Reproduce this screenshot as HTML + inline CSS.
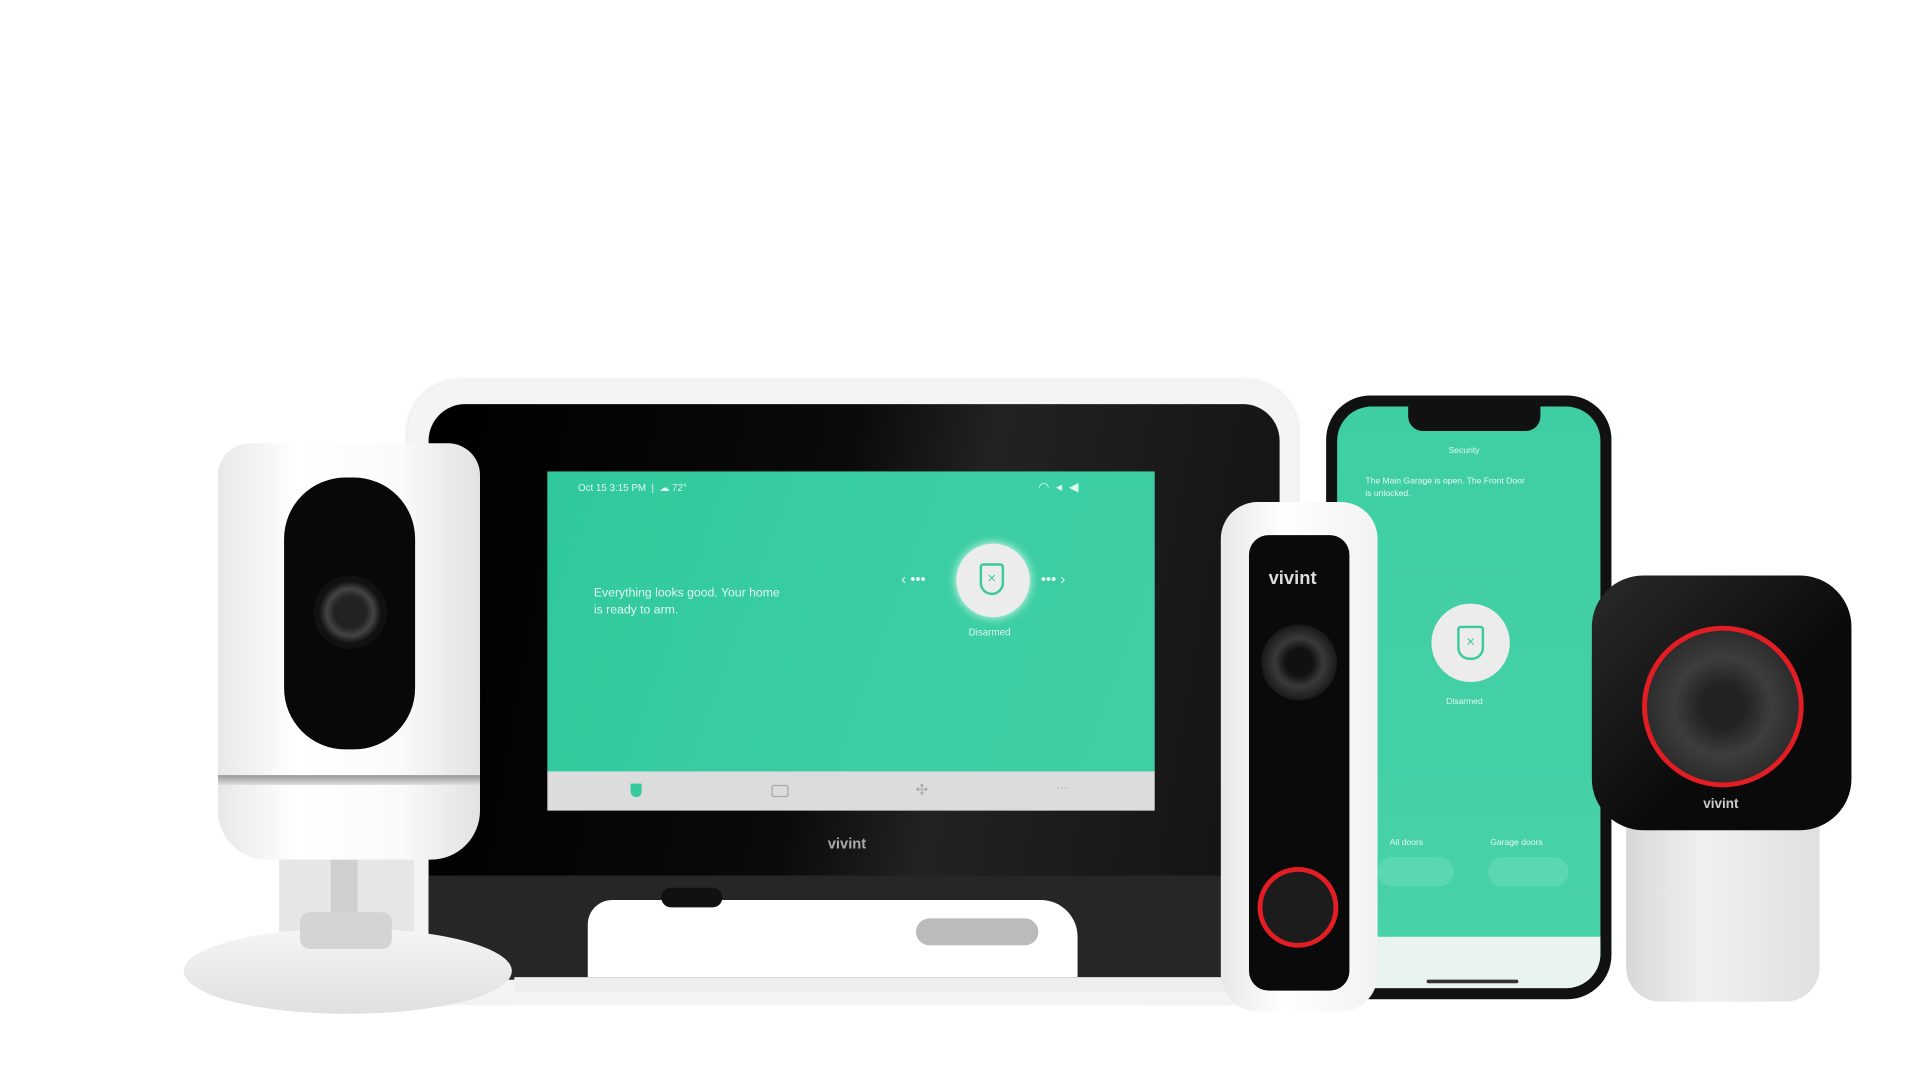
<!DOCTYPE html>
<html><head><meta charset="utf-8"><style>
html,body{margin:0;padding:0;background:#fff;width:1920px;height:1080px;overflow:hidden}
#w{position:absolute;left:0;top:0;width:1568px;height:882px;transform:scale(1.2245);transform-origin:0 0;font-family:"Liberation Sans",sans-serif}
.a{position:absolute}
</style></head><body><div id="w">
<!-- tablet -->
<div class="a" style="left:333px;top:311px;width:727px;height:508px;border-radius:42px;background:#f4f4f4;box-shadow:0 0 4px #ddd"></div>
<div class="a" style="left:350px;top:330px;width:695px;height:470px;border-radius:30px 30px 0 0;background:linear-gradient(100deg,#000 0%,#0a0a0a 45%,#222 60%,#111 100%)"></div>
<div class="a" style="left:350px;top:715px;width:650px;height:85px;background:#262626"></div>
<div class="a" style="left:480px;top:735px;width:400px;height:63px;background:#fff;border-radius:20px 30px 0 0"></div>
<div class="a" style="left:748px;top:750px;width:100px;height:22px;background:#bbb;border-radius:11px"></div>
<div class="a" style="left:540px;top:725px;width:50px;height:16px;background:#111;border-radius:8px"></div>
<div class="a" style="left:420px;top:798px;width:580px;height:12px;background:#eee"></div>
<div class="a" style="left:447px;top:385px;width:496px;height:246px;background:linear-gradient(110deg,#2fc89c 0%,#3acda3 50%,#3fcfa5 100%)"></div>
<div class="a" style="left:447px;top:630px;width:496px;height:32px;background:#dcdcdc"></div>
<div class="a" style="left:515px;top:640px;width:9px;height:11px;background:#36c99e;border-radius:0 0 5px 5px"></div>
<div class="a" style="left:630px;top:641px;width:12px;height:8px;border:1px solid #aaa;border-radius:2px"></div>
<div class="a" style="left:748px;top:638px;width:8px;height:14px;color:#aaa;font-size:12px">✣</div>
<div class="a" style="left:862px;top:638px;color:#aaa;font-size:10px">···</div>
<div class="a" style="left:472px;top:394px;color:#e0f7ef;font-size:8px">Oct 15 3:15 PM &nbsp;| &nbsp;☁ 72°</div>
<div class="a" style="left:848px;top:393px;color:#e0f7ef;font-size:10px">◠ &nbsp;◂ &nbsp;◀</div>
<div class="a" style="left:485px;top:478px;color:#e3f7f0;font-size:10px;line-height:14px">Everything looks good. Your home<br>is ready to arm.</div>
<div class="a" style="left:781px;top:444px;width:60px;height:60px;border-radius:50%;background:#ececec;box-shadow:0 0 8px #e8fff6"></div>
<div class="a" style="left:800px;top:460px;width:20px;height:26px;border:2px solid #3cc99e;border-radius:3px 3px 10px 10px;box-sizing:border-box;color:#3cc99e;font-size:12px;text-align:center;line-height:20px">×</div>
<div class="a" style="left:736px;top:466px;color:#e8f8f2;font-size:12px">‹ •••</div>
<div class="a" style="left:850px;top:466px;color:#e8f8f2;font-size:12px">••• ›</div>
<div class="a" style="left:791px;top:512px;color:#e0f5ee;font-size:8px">Disarmed</div>
<div class="a" style="left:676px;top:682px;color:#aaa;font-size:12px;font-weight:bold">vivint</div>
<!-- left camera -->
<div class="a" style="left:228px;top:690px;width:110px;height:110px;background:#e6e6e6"></div>
<div class="a" style="left:270px;top:690px;width:22px;height:70px;background:#cfcfcf"></div>
<div class="a" style="left:150px;top:758px;width:268px;height:70px;border-radius:50%;background:linear-gradient(#f5f5f5,#e0e0e0)"></div>
<div class="a" style="left:245px;top:745px;width:75px;height:30px;border-radius:8px;background:#d4d4d4"></div>
<div class="a" style="left:178px;top:362px;width:214px;height:340px;border-radius:26px 26px 40px 40px;background:linear-gradient(90deg,#e8e8e8,#fff 30%,#fafafa 70%,#e2e2e2)"></div>
<div class="a" style="left:178px;top:633px;width:214px;height:8px;background:linear-gradient(#999,#ddd)"></div>
<div class="a" style="left:232px;top:390px;width:107px;height:222px;border-radius:50px;background:#080808"></div>
<div class="a" style="left:256px;top:470px;width:60px;height:60px;border-radius:50%;background:radial-gradient(#222 30%,#444 45%,#111 60%)"></div>
<!-- phone -->
<div class="a" style="left:1083px;top:323px;width:233px;height:493px;border-radius:36px;background:#111"></div>
<div class="a" style="left:1092px;top:332px;width:215px;height:475px;border-radius:28px;background:linear-gradient(#3fcea4,#44d0a6 60%,#4ad2a9)"></div>
<div class="a" style="left:1150px;top:332px;width:108px;height:20px;border-radius:0 0 12px 12px;background:#111"></div>
<div class="a" style="left:1092px;top:765px;width:215px;height:42px;border-radius:0 0 28px 28px;background:#e9f3ef"></div>
<div class="a" style="left:1165px;top:800px;width:75px;height:3px;background:#333;border-radius:2px"></div>
<div class="a" style="left:1183px;top:365px;color:#e8f8f2;font-size:7px">Security</div>
<div class="a" style="left:1115px;top:389px;color:#e8f8f2;font-size:7px;line-height:10px">The Main Garage is open. The Front Door<br>is unlocked.</div>
<div class="a" style="left:1169px;top:493px;width:64px;height:64px;border-radius:50%;background:#ececec"></div>
<div class="a" style="left:1190px;top:511px;width:22px;height:28px;border:2px solid #3cc99e;border-radius:3px 3px 10px 10px;box-sizing:border-box;color:#3cc99e;font-size:12px;text-align:center;line-height:22px">×</div>
<div class="a" style="left:1181px;top:570px;color:#e0f5ee;font-size:7px">Disarmed</div>
<div class="a" style="left:1135px;top:685px;color:#e8f8f2;font-size:7px">All doors</div>
<div class="a" style="left:1217px;top:685px;color:#e8f8f2;font-size:7px">Garage doors</div>
<div class="a" style="left:1125px;top:700px;width:62px;height:24px;border-radius:12px;background:#5ad8b1"></div>
<div class="a" style="left:1215px;top:700px;width:66px;height:24px;border-radius:12px;background:#5ad8b1"></div>
<!-- doorbell -->
<div class="a" style="left:997px;top:410px;width:128px;height:416px;border-radius:30px;background:linear-gradient(90deg,#e8e8e8,#fff 40%,#f2f2f2)"></div>
<div class="a" style="left:1020px;top:437px;width:82px;height:372px;border-radius:16px;background:#0a0a0a"></div>
<div class="a" style="left:1036px;top:464px;color:#ddd;font-size:15px;font-weight:bold">vivint</div>
<div class="a" style="left:1030px;top:510px;width:62px;height:62px;border-radius:50%;background:radial-gradient(#111 25%,#3a3a3a 45%,#1a1a1a 70%)"></div>
<div class="a" style="left:1027px;top:708px;width:58px;height:58px;border-radius:50%;border:4px solid #e21d23;background:#1c1c1c"></div>
<!-- right camera -->
<div class="a" style="left:1328px;top:650px;width:158px;height:168px;border-radius:10px 10px 28px 28px;background:linear-gradient(90deg,#d8d8d8,#f0f0f0 40%,#e0e0e0)"></div>
<div class="a" style="left:1300px;top:470px;width:212px;height:208px;border-radius:42px;background:linear-gradient(135deg,#2a2a2a,#0a0a0a 60%)"></div>
<div class="a" style="left:1341px;top:511px;width:124px;height:124px;border-radius:50%;border:4px solid #e21d23;background:radial-gradient(#222 20%,#3d3d3d 45%,#2a2a2a 75%)"></div>
<div class="a" style="left:1391px;top:651px;color:#ccc;font-size:11px;font-weight:bold">vivint</div>
</div></body></html>
